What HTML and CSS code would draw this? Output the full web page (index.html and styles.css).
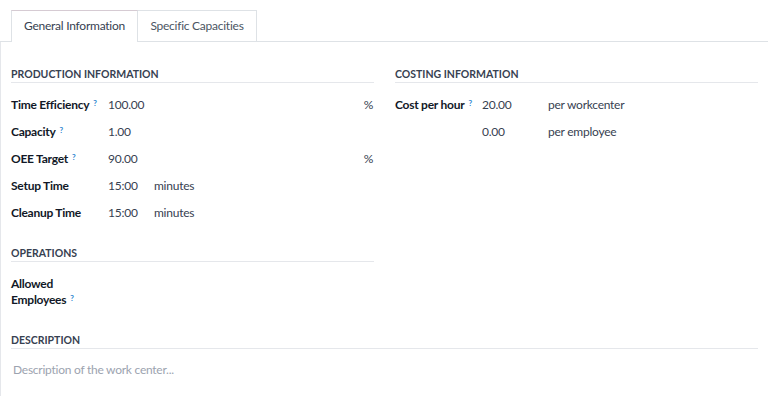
FILE: index.html
```html
<!DOCTYPE html>
<html>
<head>
<meta charset="utf-8">
<link rel="stylesheet" href="styles.css">
</head>
<body>
<div class="tabs">
  <div class="tab active">General Information</div>
  <div class="tab second">Specific Capacities</div>
</div>
<div class="sheet">
  <div class="cols">
    <div class="col">
      <div class="heading">Production Information</div>
      <div class="rows rows-left">
        <div class="row"><span class="label">Time Efficiency<sup>?</sup></span><span class="value grow">100.00</span><span class="unit">%</span></div>
        <div class="row"><span class="label">Capacity<sup>?</sup></span><span class="value grow">1.00</span></div>
        <div class="row"><span class="label">OEE Target<sup>?</sup></span><span class="value grow">90.00</span><span class="unit">%</span></div>
        <div class="row"><span class="label">Setup Time</span><span class="value time">15:00</span><span class="suffix">minutes</span></div>
        <div class="row"><span class="label">Cleanup Time</span><span class="value time">15:00</span><span class="suffix">minutes</span></div>
      </div>
      <div class="heading heading-ops">Operations</div>
      <div class="allowed">Allowed<br>Employees<sup>?</sup></div>
    </div>
    <div class="col">
      <div class="heading">Costing Information</div>
      <div class="rows rows-right">
        <div class="row"><span class="label">Cost per hour<sup>?</sup></span><span class="value cost">20.00</span><span class="suffix">per workcenter</span></div>
        <div class="row"><span class="label"></span><span class="value cost">0.00</span><span class="suffix">per employee</span></div>
      </div>
    </div>
  </div>
  <div class="heading heading-desc">Description</div>
  <div class="placeholder">Description of the work center...</div>
</div>
</body>
</html>
```
FILE: styles.css
```css
html, body {
  margin: 0;
  padding: 0;
  background: #ffffff;
}
body {
  font-family: Lato, "Noto Sans", sans-serif;
  font-size: 12px;
  letter-spacing: -0.25px;
  color: #1f2937;
  width: 768px;
  height: 396px;
  overflow: hidden;
}
.tabs {
  display: flex;
  padding: 10px 0 0 11px;
  border-bottom: 1px solid #dee2e6;
  height: 31px;
}
.tab {
  height: 31px;
  line-height: 30px;
  border: 1px solid #dee2e6;
  border-bottom: none;
  box-sizing: border-box;
  color: #4b5563;
  background: #fff;
  white-space: nowrap;
  text-align: center;
}
.tab.active {
  color: #374151;
  border-top-color: #d6cbd3;
  height: 32px;
  margin-bottom: -1px;
  width: 127px;
}
.tab.second {
  border-left: none;
  width: 119px;
}
.sheet {
  border-left: 1px solid #e5e7eb;
  padding: 24px 10px 0 10px;
  height: 354px;
  box-sizing: border-box;
}
.cols {
  display: flex;
  gap: 21px;
}
.col {
  width: 363px;
}
.heading {
  font-size: 10.5px;
  font-weight: 700;
  letter-spacing: 0;
  text-transform: uppercase;
  color: #374151;
  line-height: 16px;
  border-bottom: 1px solid #e5e7eb;
}
.rows {
  margin-top: 8px;
}
.row {
  display: flex;
  align-items: center;
  height: 27px;
}
.label {
  font-weight: 700;
  color: #111827;
  flex: none;
}
.rows-left .label { width: 97px; }
.rows-right .label { width: 87px; }
sup {
  font-size: 8px;
  line-height: 8px;
  color: #2f86d0;
  font-weight: 700;
  vertical-align: top;
  position: relative;
  top: 2px;
  margin-left: 4px;
}
.value {
  color: #374151;
}
.grow { flex: 1; }
.unit {
  color: #374151;
  padding-right: 1px;
}
.time { width: 46px; flex: none; }
.cost { width: 66px; flex: none; }
.suffix { color: #374151; }
.heading-ops {
  margin-top: 19px;
}
.allowed {
  margin-top: 14px;
  font-weight: 700;
  color: #111827;
  line-height: 16px;
}
.heading-desc {
  margin-top: 24px;
}
.placeholder {
  margin-top: 13px;
  line-height: 16px;
  color: #9ca3af;
  padding-left: 2px;
}
```
